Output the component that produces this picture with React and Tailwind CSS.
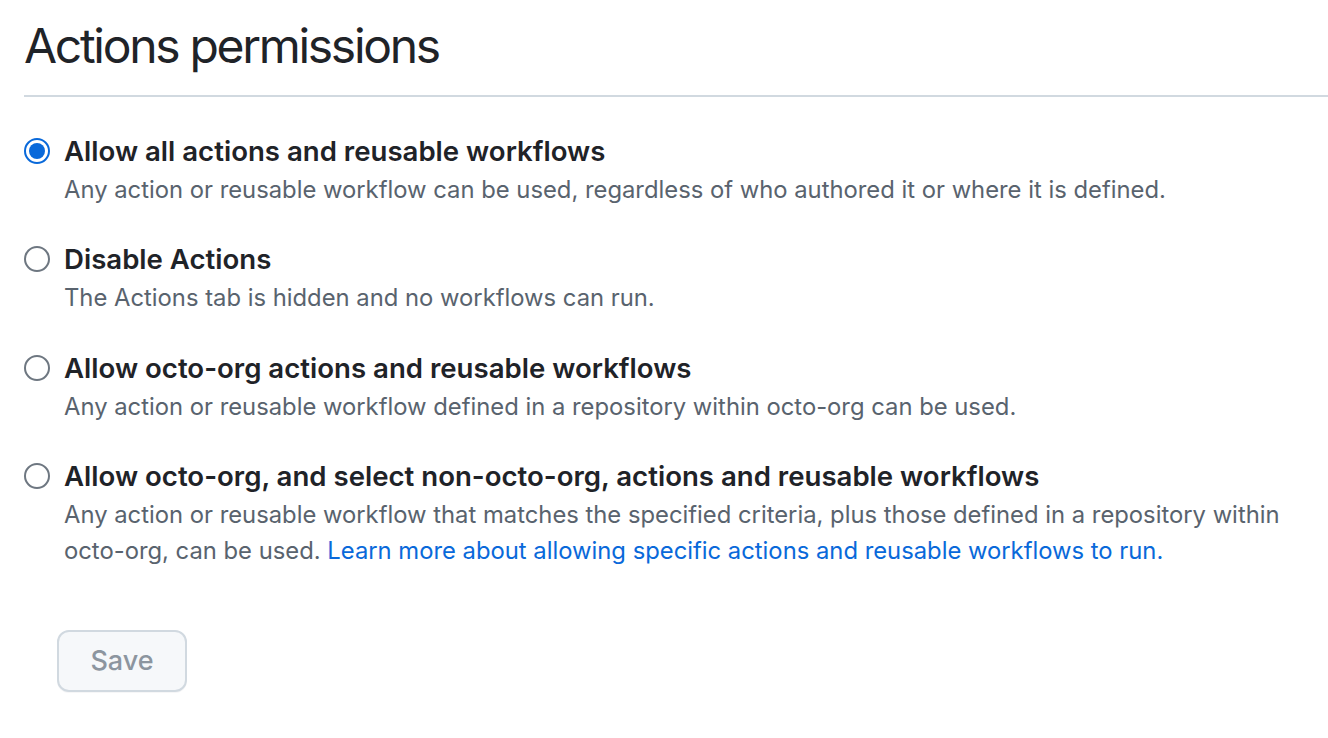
import React, { useState } from 'react'

const options = [
  {
    id: 'all',
    label: 'Allow all actions and reusable workflows',
    desc: 'Any action or reusable workflow can be used, regardless of who authored it or where it is defined.',
  },
  {
    id: 'disable',
    label: 'Disable Actions',
    desc: 'The Actions tab is hidden and no workflows can run.',
  },
  {
    id: 'org',
    label: 'Allow octo-org actions and reusable workflows',
    desc: 'Any action or reusable workflow defined in a repository within octo-org can be used.',
  },
  {
    id: 'select',
    label: 'Allow octo-org, and select non-octo-org, actions and reusable workflows',
    desc: 'Any action or reusable workflow that matches the specified criteria, plus those defined in a repository within octo-org, can be used.',
    link: 'Learn more about allowing specific actions and reusable workflows to run.',
  },
]

const Radio = ({ checked }) => (
  <span
    className={`mt-[8px] flex items-center justify-center w-[26px] h-[26px] shrink-0 rounded-full border-2 bg-white ${
      checked ? 'border-[#0969da]' : 'border-[#6e7781]'
    }`}
  >
    {checked && <span className="block w-[16px] h-[16px] rounded-full bg-[#0969da]" />}
  </span>
)

export default function App() {
  const [selected, setSelected] = useState('all')

  return (
    <div className="min-h-screen bg-white font-['Inter',sans-serif] text-[#1f2328]">
      <div className="pl-[24px]">
        <h2 className="pt-[20px] pb-[23px] text-[48px] leading-[52px] font-normal tracking-[-2.3px] border-b-2 border-[#d1d9e0]">
          Actions permissions
        </h2>

        <div className="mt-[33px] flex flex-col gap-[30.3px]">
          {options.map(opt => (
            <label
              key={opt.id}
              className="flex gap-[14px] cursor-pointer"
              onClick={() => setSelected(opt.id)}
            >
              <Radio checked={selected === opt.id} />
              <div>
                <div className="text-[27.6px] leading-[42px] font-semibold">{opt.label}</div>
                <p className="pr-[20px] text-[23.8px] leading-[36px] text-[#59636e]">
                  {opt.desc}
                  {opt.link && (
                    <>
                      {' '}
                      <a href="#" className="text-[#0969da]">{opt.link}</a>
                    </>
                  )}
                </p>
              </div>
            </label>
          ))}
        </div>

        <button className="mt-[61px] ml-[33px] w-[130px] h-[62px] rounded-[12px] border-2 border-[#d1d9e0] bg-[#f6f8fa] text-[27px] font-medium text-[#8c959f] shadow-[0_1px_0_rgba(31,35,40,0.04)]">
          Save
        </button>
      </div>
    </div>
  )
}
